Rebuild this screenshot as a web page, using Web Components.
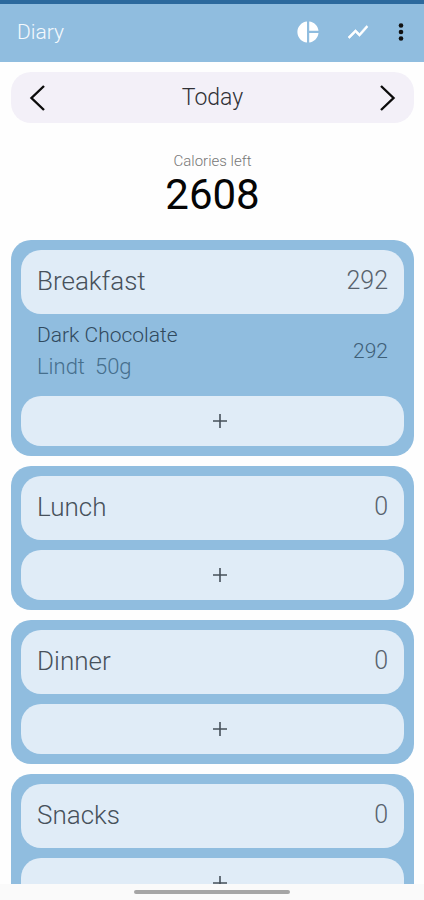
<!DOCTYPE html>
<html lang="en">
<head>
<meta charset="utf-8">
<meta name="viewport" content="width=device-width, initial-scale=1">
<title>Diary</title>
<style>
  body {
    margin: 0;
    background: #fefefe;
    font-family: Roboto, "Liberation Sans", sans-serif;
    font-weight: 300;
  }
</style>
</head>
<body>
<diary-app>
  <app-bar slot="header" heading="Diary"></app-bar>
  <date-picker label="Today"></date-picker>
  <calorie-summary label="Calories left" value="2608"></calorie-summary>
  <meal-card name="Breakfast" total="292">
    <food-item name="Dark Chocolate" brand="Lindt" amount="50g" calories="292"></food-item>
  </meal-card>
  <meal-card name="Lunch" total="0"></meal-card>
  <meal-card name="Dinner" total="0"></meal-card>
  <meal-card name="Snacks" total="0"></meal-card>
</diary-app>

<script>
class DiaryApp extends HTMLElement {
  constructor() {
    super();
    this.attachShadow({ mode: "open" });
  }

  connectedCallback() {
    this.shadowRoot.innerHTML = `
      <style>
        :host {
          display: flex;
          flex-direction: column;
          height: 100vh;
        }
        main {
          flex: 1;
          min-height: 0;
          overflow-y: auto;
          scrollbar-width: none;
          display: flex;
          flex-direction: column;
          gap: 10px;
          padding: 10px 10px 10px 11px;
          box-sizing: border-box;
        }
        footer {
          display: flex;
          align-items: center;
          justify-content: center;
          height: 16px;
          background: #fafafa;
        }
        .handle {
          width: 37%;
          height: 4px;
          border-radius: 2px;
          background: #a5a5a5;
        }
      </style>
      <slot name="header"></slot>
      <main><slot></slot></main>
      <footer><div class="handle"></div></footer>
    `;
  }
}

class AppBar extends HTMLElement {
  constructor() {
    super();
    this.attachShadow({ mode: "open" });
  }

  connectedCallback() {
    this.shadowRoot.innerHTML = `
      <style>
        :host {
          display: block;
          flex: none;
          border-top: 4px solid #2c699d;
          background: #90bddf;
          color: #f4f9fd;
        }
        header {
          display: flex;
          align-items: center;
          height: 56px;
          padding: 0 8px 2px 17px;
        }
        h1 {
          flex: 1;
          margin: 0;
          font-size: 21px;
          line-height: 24px;
          font-weight: 300;
        }
        nav {
          display: flex;
          align-items: center;
          gap: 26px;
        }
        button {
          display: block;
          padding: 0;
          border: none;
          background: none;
          color: white;
          cursor: pointer;
        }
        .more {
          margin-left: -4px;
          color: #111;
        }
        svg {
          display: block;
          fill: currentColor;
        }
        .trend {
          stroke: currentColor;
          stroke-width: 0.6;
        }
      </style>
      <header>
        <h1>${this.getAttribute("heading")}</h1>
        <nav>
          <button aria-label="Nutrients">
            <svg width="24" height="24" viewBox="0 0 24 24">
              <path d="M11 1.5v21C5.6 22 1.4 17.5 1.4 12S5.600 2 11 1.500zM13.200 1.500v9.300h9.300C22 5.900 18.100 2 13.200 1.500zM13.200 13v9.500c4.900-.5 8.800-4.500 9.300-9.500z"/>
            </svg>
          </button>
          <button aria-label="Statistics">
            <svg class="trend" width="24" height="24" viewBox="0 0 24 24">
              <path d="M3.500 18.500l6-6 4 4L22 6.900l-1.400-1.400-7.100 8-4-4L2 17z"/>
            </svg>
          </button>
          <button class="more" aria-label="More options">
            <svg width="24" height="24" viewBox="0 0 24 24">
              <circle cx="9" cy="5.500" r="2.300"/>
              <circle cx="9" cy="12" r="2.300"/>
              <circle cx="9" cy="18.500" r="2.300"/>
            </svg>
          </button>
        </nav>
      </header>
    `;
  }
}

class DatePicker extends HTMLElement {
  constructor() {
    super();
    this.attachShadow({ mode: "open" });
  }

  connectedCallback() {
    this.shadowRoot.innerHTML = `
      <style>
        :host {
          display: flex;
          flex: none;
          align-items: center;
          justify-content: space-between;
          height: 51px;
          padding: 0 14px;
          border-radius: 20px;
          background: #f3f0f8;
          color: #303036;
        }
        button {
          display: block;
          padding: 0;
          border: none;
          background: none;
          cursor: pointer;
        }
        svg {
          display: block;
          fill: none;
          stroke: #0b0b0b;
          stroke-width: 2.4;
        }
        span {
          font-size: 23px;
          line-height: 28px;
        }
      </style>
      <button aria-label="Previous day">
        <svg width="24" height="28" viewBox="0 0 24 28"><path d="M19 2L6.500 14 19 26"/></svg>
      </button>
      <span>${this.getAttribute("label")}</span>
      <button aria-label="Next day">
        <svg width="24" height="28" viewBox="0 0 24 28"><path d="M5 2l12.500 12L5 26"/></svg>
      </button>
    `;
  }
}

class CalorieSummary extends HTMLElement {
  constructor() {
    super();
    this.attachShadow({ mode: "open" });
  }

  connectedCallback() {
    this.shadowRoot.innerHTML = `
      <style>
        :host {
          display: block;
          flex: none;
          padding: 19px 0 10px;
          text-align: center;
        }
        .label {
          font-size: 15px;
          line-height: 18px;
          color: #777;
        }
        .value {
          font-size: 42px;
          line-height: 50px;
          font-weight: 400;
          color: #050505;
        }
      </style>
      <div class="label">${this.getAttribute("label")}</div>
      <div class="value">${this.getAttribute("value")}</div>
    `;
  }
}

class MealCard extends HTMLElement {
  constructor() {
    super();
    this.attachShadow({ mode: "open" });
  }

  connectedCallback() {
    const name = this.getAttribute("name");

    this.shadowRoot.innerHTML = `
      <style>
        :host {
          display: block;
          flex: none;
          padding: 10px;
          border-radius: 20px;
          background: #90bddf;
        }
        .meal-header {
          display: flex;
          align-items: center;
          justify-content: space-between;
          height: 62px;
          padding: 0 16px 2px;
          border-radius: 20px;
          background: #e0ecf7;
          color: #58626d;
          font-size: 25px;
          line-height: 32px;
        }
        h2 {
          margin: 0;
          font-size: 26px;
          font-weight: 300;
          color: #47515b;
        }
        .items {
          min-height: 10px;
        }
        .add-btn {
          display: flex;
          align-items: center;
          justify-content: center;
          width: 100%;
          height: 50px;
          padding: 0 0 0 14px;
          border: none;
          border-radius: 20px;
          background: #e0ecf7;
          cursor: pointer;
        }
        .add-btn svg {
          display: block;
          stroke: #46505a;
          stroke-width: 1.6;
        }
      </style>
      <div class="meal-header">
        <h2>${name}</h2>
        <span>${this.getAttribute("total")}</span>
      </div>
      <div class="items"><slot></slot></div>
      <button class="add-btn" aria-label="Add to ${name}">
        <svg width="16" height="16" viewBox="0 0 16 16"><path d="M8 1v14M1 8h14"/></svg>
      </button>
    `;
  }
}

class FoodItem extends HTMLElement {
  constructor() {
    super();
    this.attachShadow({ mode: "open" });
  }

  connectedCallback() {
    this.shadowRoot.innerHTML = `
      <style>
        :host {
          display: flex;
          align-items: center;
          justify-content: space-between;
          padding: 6px 16px 14px;
          font-size: 21px;
          line-height: 31px;
          color: #3f6078;
        }
        .name {
          color: #304a5e;
        }
        .details {
          display: flex;
          gap: 10px;
          font-size: 22px;
          color: #466f8d;
        }
      </style>
      <div>
        <div class="name">${this.getAttribute("name")}</div>
        <div class="details">
          <span>${this.getAttribute("brand")}</span>
          <span>${this.getAttribute("amount")}</span>
        </div>
      </div>
      <div class="calories">${this.getAttribute("calories")}</div>
    `;
  }
}

customElements.define("diary-app", DiaryApp);
customElements.define("app-bar", AppBar);
customElements.define("date-picker", DatePicker);
customElements.define("calorie-summary", CalorieSummary);
customElements.define("meal-card", MealCard);
customElements.define("food-item", FoodItem);
</script>
</body>
</html>
